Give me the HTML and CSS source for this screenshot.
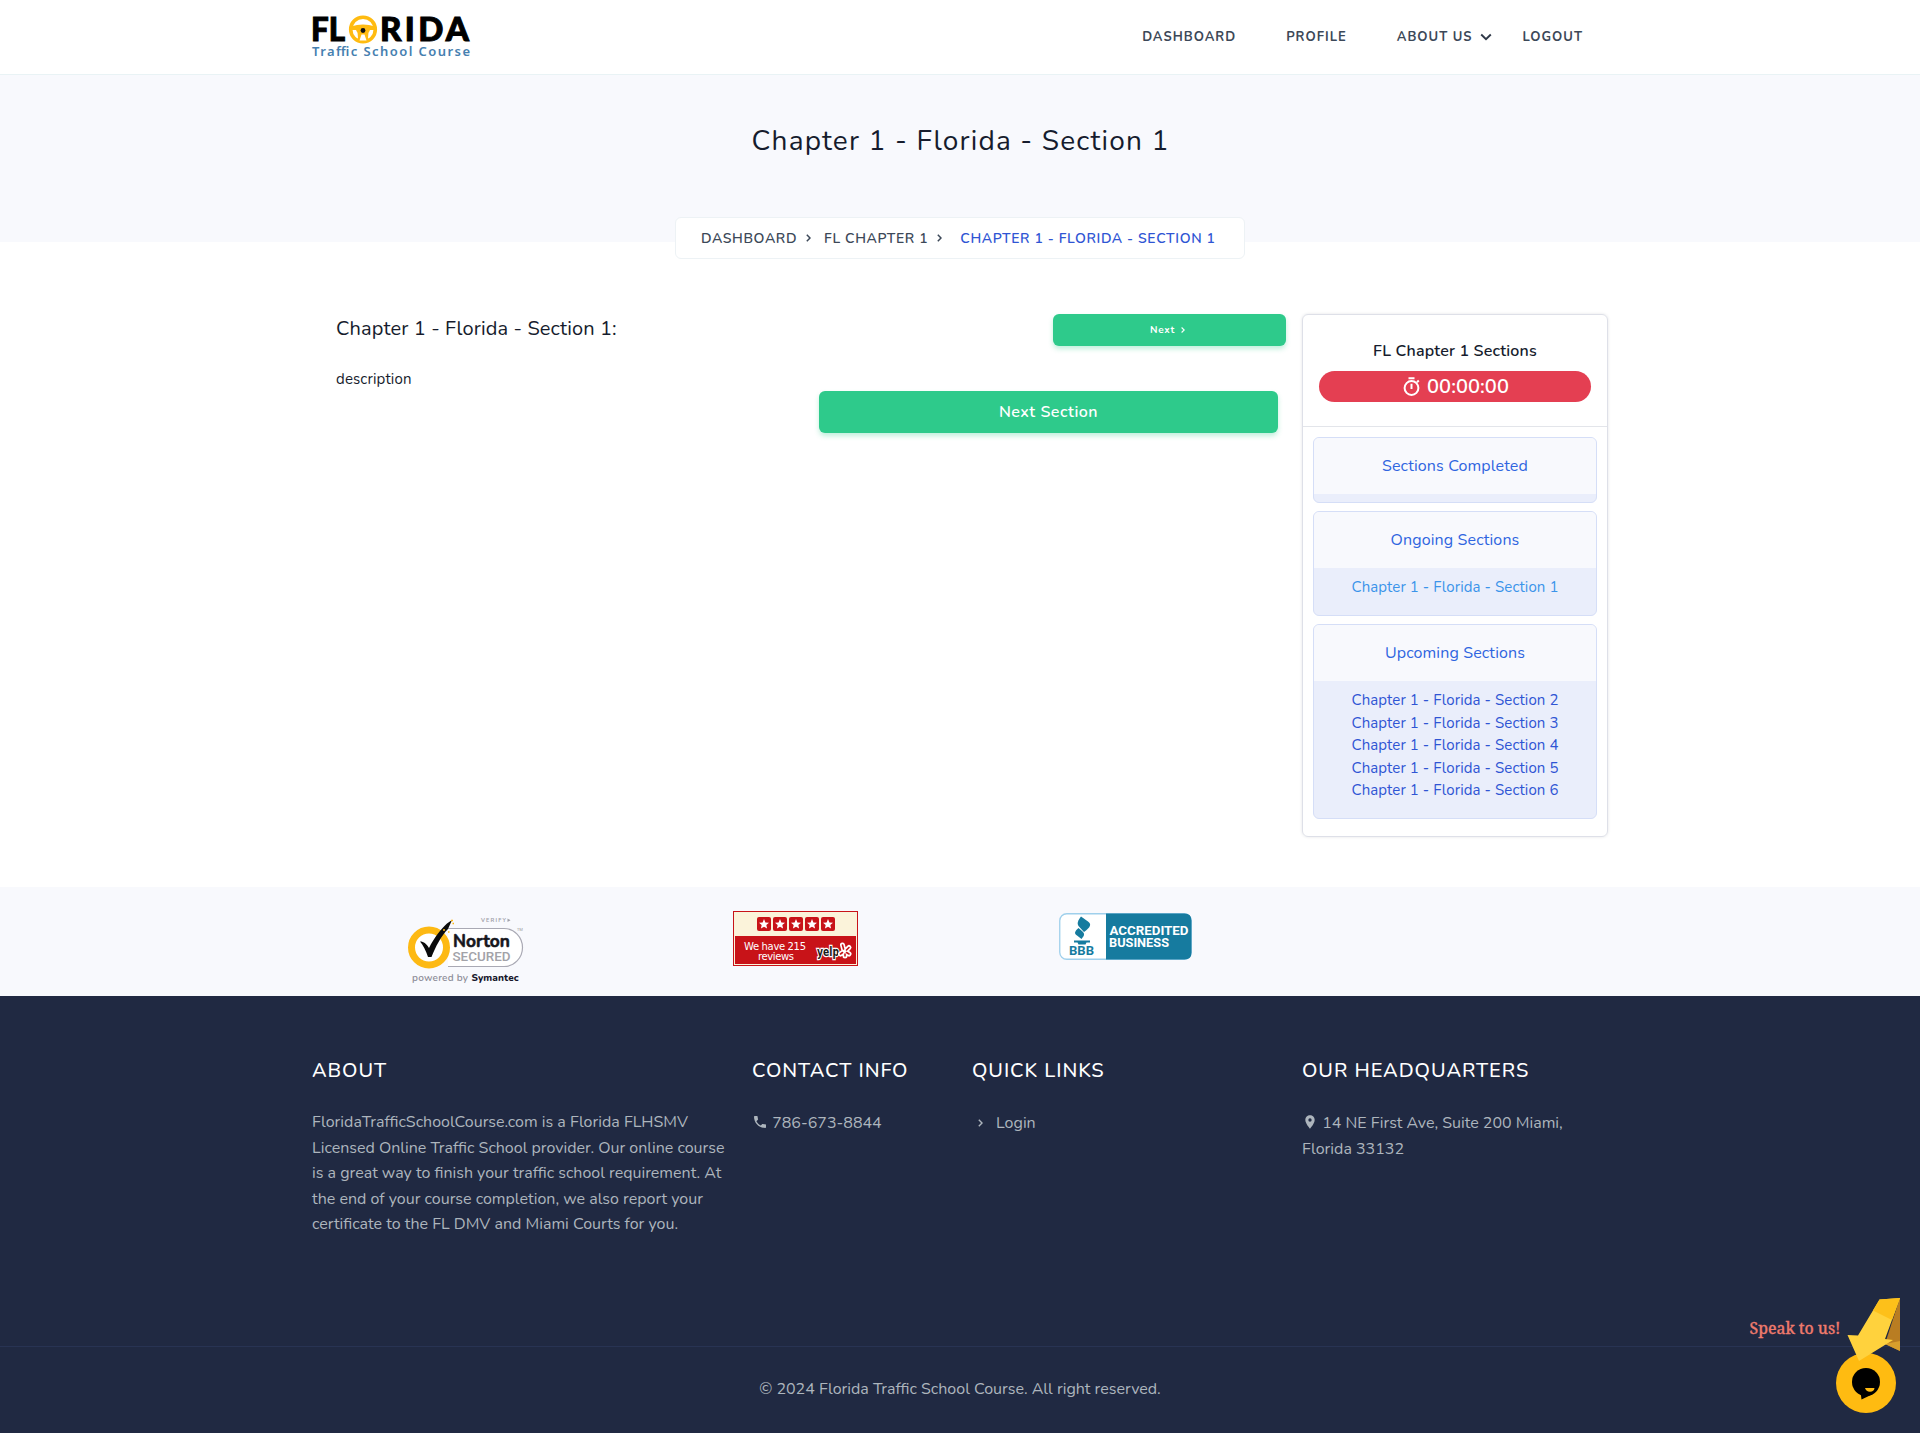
FILE: index.html
```html
<!DOCTYPE html>
<html lang="en">
<head>
<meta charset="utf-8">
<title>Florida Traffic School Course</title>
<link rel="stylesheet" href="styles.css">
</head>
<body>
<header class="topbar">
  <div class="container topbar-row">
    <svg class="logo" viewBox="0 -11 160 63" width="160" height="63" role="img" aria-label="Florida Traffic School Course">
      <g class="logo-name">
        <text x="-1" y="28" textLength="34" lengthAdjust="spacingAndGlyphs">FL</text>
        <text x="68" y="28" textLength="89" lengthAdjust="spacing">RIDA</text>
      </g>
      <circle cx="51" cy="16.500" r="12.300" fill="none" stroke="#ffbb11" stroke-width="3.600"/>
      <path d="M39 13.500Q51 9.500 63 13.500V17H58Q56 20 56 27H46Q46 20 44 17H39Z" fill="#ffbb11"/>
      <path d="M47.500 27.500L49.500 21.500H52.500L54.500 27.500ZM41 18.500L45.500 19.500L45 25ZM61 18.500L56.500 19.500L57 25Z" fill="#fff"/>
      <circle cx="51" cy="17.500" r="2.400" fill="#111"/>
      <text class="logo-tag" x="0" y="43" textLength="158" lengthAdjust="spacing">Traffic School Course</text>
    </svg>
    <nav class="nav">
      <a>Dashboard</a>
      <a>Profile</a>
      <a class="has-menu">About Us
        <svg width="12" height="8" viewBox="0 0 12 8"><path d="M1.200 1.500L6 6.200L10.800 1.500" fill="none" stroke="#2f3948" stroke-width="1.900"/></svg>
      </a>
      <a>Logout</a>
    </nav>
  </div>
</header>

<section class="hero">
  <h1>Chapter 1 - Florida - Section 1</h1>
  <ul class="breadcrumb">
    <li>Dashboard</li>
    <li class="sep"><svg width="5" height="8" viewBox="0 0 5 8"><path d="M.8.8L4 4L.8 7.200" fill="none" stroke="#3c4858" stroke-width="1.500"/></svg></li>
    <li>FL Chapter 1</li>
    <li class="sep"><svg width="5" height="8" viewBox="0 0 5 8"><path d="M.8.8L4 4L.8 7.200" fill="none" stroke="#3c4858" stroke-width="1.500"/></svg></li>
    <li class="current">Chapter 1 - Florida - Section 1</li>
  </ul>
</section>

<main class="container main-row">
  <section class="lesson">
    <div class="lesson-head">
      <h2>Chapter 1 - Florida - Section 1:</h2>
      <a class="btn btn-small">Next <svg width="4" height="6" viewBox="0 0 4 6"><path d="M.6.5L3.200 3L.6 5.500" fill="none" stroke="#fff" stroke-width="1.100"/></svg></a>
    </div>
    <p>description</p>
    <a class="btn btn-large">Next Section</a>
  </section>

  <aside class="sidebar">
    <div class="sidebar-head">
      <h3>FL Chapter 1 Sections</h3>
      <div class="timer">
        <svg width="18" height="20" viewBox="0 0 18 20" fill="none" stroke="#fff"><circle cx="8.500" cy="11" r="6.900" stroke-width="2"/><path d="M8.500 6.800V12M5.500 1.200H11.500M14 5.300L15.800 3.600" stroke-width="2"/></svg>
        <span>00:00:00</span>
      </div>
    </div>
    <div class="groups">
      <div class="group"><h4>Sections Completed</h4><ul class="empty"></ul></div>
      <div class="group"><h4>Ongoing Sections</h4><ul><li class="active">Chapter 1 - Florida - Section 1</li></ul></div>
      <div class="group"><h4>Upcoming Sections</h4>
        <ul>
          <li>Chapter 1 - Florida - Section 2</li>
          <li>Chapter 1 - Florida - Section 3</li>
          <li>Chapter 1 - Florida - Section 4</li>
          <li>Chapter 1 - Florida - Section 5</li>
          <li>Chapter 1 - Florida - Section 6</li>
        </ul>
      </div>
    </div>
  </aside>
</main>

<section class="partners">
  <div class="container partners-row">
    <svg class="norton" width="120" height="70" viewBox="0 0 120 70">
      <path d="M40 12.500H96A18.500 19 0 0 1 96 50.500H40" fill="#fff" stroke="#a9a9b4" stroke-width="1.200"/>
      <circle cx="21" cy="31.500" r="17.500" fill="#fff" stroke="#fdb913" stroke-width="7"/>
      <path d="M12 25.500C16 25.500 18.500 28 21 32C26 22 33 13 39 7.500L44 4L40 13C33 20 27.500 31 23.500 41H20C18 35 15 29 12 25.500Z" fill="#0b0b0b"/>
      <path d="M43 4.500h2M44.500 7.500h1.500M35 14h2M40 16h1.500" stroke="#fdb913" stroke-width="1.500"/>
      <text class="n-verify" x="73" y="6" textLength="25">VERIFY</text>
      <path d="M99.500 2.500L102.500 4.200L99.500 6Z" fill="#a0a0a8"/>
      <text class="n-name" x="45" y="31" textLength="57" lengthAdjust="spacingAndGlyphs">Norton</text>
      <text class="n-secured" x="44.500" y="44.500" textLength="58" lengthAdjust="spacingAndGlyphs">SECURED</text>
      <text class="n-tm" x="109" y="14.500">TM</text>
      <text class="n-power" x="4" y="65" textLength="56">powered by</text>
      <text class="n-power n-strong" x="63.500" y="65" textLength="47">Symantec</text>
    </svg>
    <svg class="yelp" width="125" height="55" viewBox="0 0 125 55">
      <defs><g id="star"><rect width="14" height="14" rx="2" fill="#c81318"/><path d="M7 2L8.400 5.400L12 5.700L9.300 8L10.100 11.600L7 9.700L3.900 11.600L4.700 8L2 5.700L5.600 5.400Z" fill="#fff"/></g></defs>
      <rect x=".5" y=".5" width="124" height="54" fill="#fbf3da" stroke="#c81318"/>
      <use href="#star" x="24" y="6"/><use href="#star" x="40" y="6"/><use href="#star" x="56" y="6"/><use href="#star" x="72" y="6"/><use href="#star" x="88" y="6"/>
      <rect x="2" y="25" width="121" height="28" fill="#c81318"/>
      <text class="y-text" x="11" y="39" textLength="62">We have 215</text>
      <text class="y-text" x="25" y="49" textLength="36">reviews</text>
      <text class="y-logo" x="84" y="45" textLength="22" lengthAdjust="spacingAndGlyphs">yelp</text>
      <g stroke-linecap="round" fill="none"><path d="M109.500 34L110.500 38M107.500 43L109.500 41.500M112 45V43M116 36.500L113.500 39M116 43L113.500 41.500" stroke="#fff" stroke-width="5"/><path d="M109.500 34L110.500 38M107.500 43L109.500 41.500M112 45V43M116 36.500L113.500 39M116 43L113.500 41.500" stroke="#c81318" stroke-width="1.600"/></g>
    </svg>
    <svg class="bbb" width="134" height="48" viewBox="0 0 134 48">
      <rect x=".75" y=".75" width="131.500" height="45.500" rx="7" fill="#fff" stroke="#9fd0ec" stroke-width="1.300"/>
      <path d="M47 .5H125.500Q132.500 .5 132.500 7.500V39.500Q132.500 46.500 125.500 46.500H47Z" fill="#167b9f"/>
      <g fill="#167b9f"><path d="M22 3.500C19.500 7 17.500 10 19.500 13L25 19C32 14 32.500 11 29 8.500Z"/><path d="M19.500 15C15.500 18.500 15 20.500 18 22.500L22.500 26C26 22 25.500 20.500 23.500 18.500Z"/><path d="M15 27.500H31V29.500H27.500L26.500 31.500H19.500L18.500 29.500H15Z"/></g>
      <text class="b-mark" x="10" y="42" textLength="25" lengthAdjust="spacingAndGlyphs">BBB</text>
      <text class="b-text" x="50.500" y="22" textLength="79" lengthAdjust="spacingAndGlyphs">ACCREDITED</text>
      <text class="b-text" x="50" y="33.500" textLength="60" lengthAdjust="spacingAndGlyphs">BUSINESS</text>
    </svg>
  </div>
</section>

<footer class="footer">
  <div class="container footer-row">
    <section class="col-about"><h5>About</h5><p>FloridaTrafficSchoolCourse.com is a Florida FLHSMV Licensed Online Traffic School provider. Our online course is a great way to finish your traffic school requirement. At the end of your course completion, we also report your certificate to the FL DMV and Miami Courts for you.</p></section>
    <section class="col-contact"><h5>Contact Info</h5><p class="contact"><svg width="16" height="16" viewBox="0 0 24 24" fill="#adb5bd"><path d="M6.620 10.790c1.440 2.830 3.760 5.150 6.590 6.590l2.200-2.200c.28-.28.67-.36 1.020-.25 1.120.37 2.320.57 3.570.57.55 0 1 .45 1 1V20c0 .55-.45 1-1 1C10.610 21 3 13.390 3 4c0-.55.45-1 1-1h3.500c.55 0 1 .45 1 1 0 1.250.2 2.450.57 3.570.11.35.03.74-.25 1.020z"/></svg> 786-673-8844</p></section>
    <section class="col-links"><h5>Quick Links</h5><p class="link"><svg width="5" height="8" viewBox="0 0 5 8"><path d="M.8.8L4 4L.8 7.200" fill="none" stroke="#adb5bd" stroke-width="1.400"/></svg>Login</p></section>
    <section class="col-hq"><h5>Our Headquarters</h5><p class="contact"><svg width="16" height="16" viewBox="0 0 24 24" fill="#adb5bd"><path d="M12 2C8.130 2 5 5.130 5 9c0 5.250 7 13 7 13s7-7.750 7-13c0-3.870-3.130-7-7-7zm0 9.500a2.500 2.500 0 1 1 0-5 2.500 2.500 0 0 1 0 5z"/></svg> 14 NE First Ave, Suite 200 Miami, Florida 33132</p></section>
  </div>
  <div class="copyright">© 2024 Florida Traffic School Course. All right reserved.</div>
</footer>

<div class="chat">
  <svg width="160" height="125" viewBox="0 0 160 125">
    <text class="chat-label" x="9.500" y="42" textLength="91" lengthAdjust="spacingAndGlyphs">Speak to us!</text>
    <circle cx="126" cy="91" r="30" fill="#ffbb11"/>
    <path d="M160 5.500V59L145 52Z" fill="#b97d22"/><path d="M145 52L160 49V59Z" fill="#d79e2c"/>
    <path d="M139.500 7.500L160 6L145 47L153 48L119 69L107.500 43L118 43.500Z" fill="#ffd23d"/>
    <path d="M139.500 7.500L160 6L152 28L133 18.500Z" fill="#fdc01a"/>
    <circle cx="126" cy="90" r="14" fill="#000"/>
    <path d="M120.500 100L121.500 107.500L133 102Z" fill="#000"/>
    <path d="M125 96H134.500Q134 99.800 130 99.800Q126 99.500 125 96Z" fill="#ffbb11"/>
  </svg>
</div>
</body>
</html>
```
FILE: styles.css
```css
* { box-sizing: border-box; }
body { margin: 0; background: #fff; color: #161c2d; font: 400 16px/1.5 Nunito, Lato, sans-serif; }
h1, h2, h3, h4, h5, p, ul { margin: 0; padding: 0; }
ul { list-style: none; }
.container { width: 1320px; margin: 0 auto; padding: 0 12px; }

.topbar { height: 75px; border-bottom: 1px solid #e9f3f5; background: #fff; }
.topbar-row { display: flex; justify-content: space-between; align-items: flex-start; }
.logo { margin-top: 2px; overflow: visible; }
.logo-name { font: 900 33px Lato, sans-serif; fill: #000; stroke: #000; stroke-width: 1px; }
.logo-tag { font: 600 13px "Noto Sans", sans-serif; fill: #4680b0; }
.nav { display: flex; padding: 25px 25px 0 0; font-size: 13px; font-weight: 700; line-height: 24px; letter-spacing: 1px; text-transform: uppercase; color: #3c4858; }
.nav a { margin-left: 50px; }
.nav .has-menu + a { margin-left: 31px; }
.nav .has-menu { display: flex; align-items: center; gap: 7px; }

.hero { height: 167px; padding-top: 45px; background: #f8f9fd; display: flex; flex-direction: column; align-items: center; gap: 55px; text-align: center; }
h1 { padding-left: 1px; font-size: 28px; font-weight: 450; line-height: 42px; letter-spacing: 1.180px; }
.breadcrumb { display: flex; flex: none; align-items: center; height: 42px; width: 570px; padding: 0 25px; background: #fff; border: 1px solid #edf2f5; border-radius: 6px; font-size: 14px; font-weight: 600; letter-spacing: .620px; text-transform: uppercase; color: #3c4858; }
.breadcrumb .sep { display: flex; margin: 0 13px 0 9px; }
.breadcrumb .sep ~ .sep { margin: 0 18px 0 9px; }
.breadcrumb .current { color: #2f55d4; }

.main-row { display: flex; justify-content: space-between; padding-top: 72px; height: 645px; }
.lesson { width: 974px; padding-left: 24px; display: flex; flex-direction: column; }
.lesson-head { display: flex; justify-content: space-between; align-items: flex-start; height: 53px; }
h2 { margin-top: 1px; font-size: 20px; font-weight: 450; line-height: 28px; letter-spacing: .12px; }
.lesson p { height: 24px; font-size: 15px; line-height: 25px; letter-spacing: .14px; }
.btn { display: flex; align-items: center; justify-content: center; background: #2eca8b; color: #fff; border-radius: 6px; box-shadow: 0 3px 5px rgba(46, 202, 139, .3); letter-spacing: .5px; }
.btn-small { width: 233px; height: 32px; font-size: 10px; font-weight: 700; letter-spacing: .65px; gap: 6px; padding-right: 4px; }
.btn-large { width: 459px; height: 42px; align-self: flex-end; margin-right: 8px; font-weight: 600; font-size: 16px; }

.sidebar { width: 306px; height: 523px; border: 1px solid #dee0e8; border-radius: 6px; box-shadow: 0 0 3px rgba(60, 72, 88, .15); }
.sidebar-head { height: 112px; padding: 24px 16px 0; border-bottom: 1px solid #e3e5ea; text-align: center; }
h3 { font-size: 16px; font-weight: 600; line-height: 24px; letter-spacing: .17px; }
.timer { display: flex; align-items: center; justify-content: center; gap: 6px; height: 31px; margin-top: 8px; padding-left: 2px; border-radius: 16px; background: #e43f52; color: #fff; font-size: 20px; font-weight: 600; letter-spacing: .05px; }
.groups { display: flex; flex-direction: column; gap: 8px; padding: 10px; }
.group { border: 1px solid #d5def7; border-radius: 6px; overflow: hidden; text-align: center; background: #eaeefb; }
h4 { height: 56px; line-height: 56px; font-size: 16px; font-weight: 450; letter-spacing: .13px; color: #2f65e0; background: #f8f9fd; }
.group ul { padding: 8px 0 16.500px; font-size: 15px; font-weight: 450; line-height: 22.500px; letter-spacing: .09px; color: #2f55d4; }
.group .empty { padding: 8px 0 0; }
.group .active { color: #3b94ea; }

.partners { height: 109px; background: #f8f9fd; }
.partners-row { display: grid; grid-template-columns: repeat(4, 1fr); }
.norton { margin: 29px 0 0 96px; }
.yelp { margin: 24px 0 0 97px; }
.bbb { margin: 26px 0 0 99px; }
.n-verify { font: 700 5.500px Nunito, sans-serif; fill: #a0a0a8; }
.n-name { font: 700 18px Nunito, sans-serif; fill: #16161c; stroke: #16161c; stroke-width: .6px; }
.n-secured { font: 500 13px Roboto, sans-serif; fill: #a2a2a8; }
.n-tm { font: 4px "Noto Sans", sans-serif; fill: #999; }
.n-power { font: 600 10px Nunito, sans-serif; fill: #8d8d98; }
.n-strong { font-weight: 800; fill: #15152a; }
.y-text { font: 10px "DejaVu Sans", sans-serif; fill: #fff; }
.y-logo { font: 700 13px "DejaVu Sans", sans-serif; fill: #1b1b1b; stroke: #fff; stroke-width: 2.500px; paint-order: stroke; }
.b-mark { font: 700 12px Roboto, sans-serif; fill: #167b9f; }
.b-text { font: 700 12px Roboto, sans-serif; fill: #fff; }

.footer { height: 437px; background: #202942; color: #adb5bd; }
.footer-row { display: grid; grid-template-columns: 440px 220px 330px 306px; height: 350px; padding-top: 60px; }
h5 { font-size: 20px; font-weight: 500; line-height: 30px; letter-spacing: .940px; text-transform: uppercase; color: #fff; }
.footer p { margin-top: 24px; line-height: 25.600px; }
.col-about { width: 416px; }
.footer .contact, .footer .link { margin-top: 25px; }
.contact svg { vertical-align: -2px; }
.link { display: flex; align-items: center; gap: 13px; padding-left: 6px; }
.link svg { margin-bottom: 2px; }
.copyright { height: 87px; border-top: 1px solid #283353; text-align: center; line-height: 84px; }
.chat { position: absolute; left: 1740px; top: 1292px; width: 160px; height: 125px; }
.chat-label { font: 500 17px "Noto Serif", "DejaVu Serif", serif; fill: #ee7a6c; stroke: #ee7a6c; stroke-width: .3px; }
```
